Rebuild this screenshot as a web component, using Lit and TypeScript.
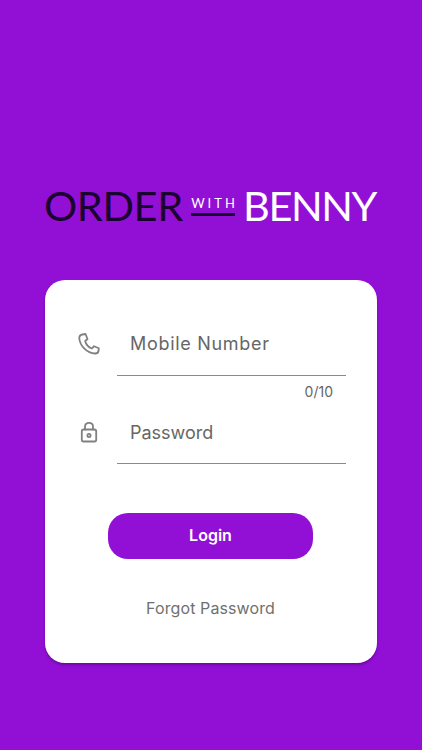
import { LitElement, html, css } from "lit";
import { customElement } from "lit/decorators.js";

@customElement("app-root")
export class AppRoot extends LitElement {
  static styles = css`
    :host { display: block; width: 422px; height: 750px; background: #9210d6; overflow: hidden; font-family: Inter, "Liberation Sans", sans-serif; box-sizing: border-box; padding-top: 181px; }
    .logo { display: flex; align-items: center; height: 48px; padding-left: 44px; font-family: Lato, "Liberation Sans", sans-serif; font-size: 41.5px; line-height: 48px; }
    .order { color: #1a0330; width: 139px; white-space: nowrap; letter-spacing: -0.4px; }
    .benny { color: #fff; white-space: nowrap; letter-spacing: -1.4px; }
    .with { width: 44px; margin: 0 8px 0 8px; display: flex; flex-direction: column; align-items: center; }
    .with span { color: #fff; font-size: 13px; line-height: 16px; letter-spacing: 3px; margin-right: -3px; font-weight: 400; }
    .with i { display: block; width: 44px; height: 3px; background: #1a0330; margin-top: 2px; }
    .card { margin: 51px 45px 0; height: 383px; box-sizing: border-box; background: #fff; border-radius: 20px; box-shadow: 0 2px 3px rgba(50,0,80,.4); padding: 32px 31px 0 32px; display: flex; flex-direction: column; }
    .row { display: flex; align-items: flex-start; height: 64px; }
    .row.second { height: 63px; }
    .icon { width: 24px; height: 24px; margin-top: 19px; color: #808080; flex: none; }
    .field { margin-left: 16px; flex: 1; box-sizing: border-box; border-bottom: 1.5px solid #8a8a8a; padding: 21px 0 0 13px; font-size: 18px; line-height: 22px; color: #666; }
    .row .field { height: 64px; }
    .row.second .field { height: 63px; }
    .wide { letter-spacing: .7px; }
    .count { text-align: right; font-size: 14px; line-height: 18px; color: #666; padding: 7px 13px 0 0; height: 25px; box-sizing: border-box; }
    .btn { align-self: center; margin: 49px 0 0 -2px; width: 205px; height: 46px; padding: 0 0 1px; border: 0; border-radius: 20px; background: #9210d6; color: #fff; font: 600 16px/45px Inter, "Liberation Sans", sans-serif; }
    .forgot { margin: 39px 0 0 -2px; text-align: center; font-size: 16px; line-height: 20px; color: #707070; letter-spacing: .1px; }
  `;

  render() {
    return html`
      <div class="logo">
        <span class="order">ORDER</span>
        <div class="with"><span>WITH</span><i></i></div>
        <span class="benny">BENNY</span>
      </div>
      <div class="card">
        <div class="row">
          <svg class="icon" viewBox="0 0 24 24" fill="none" stroke="currentColor" stroke-width="1.8" stroke-linejoin="round" stroke-linecap="round">
            <path transform="translate(0 1)" d="M5.5 2.5 L8.5 2 L10.5 7 L8.2 9 C9 12.5 12 15.5 15 16.5 L17 14.2 L21.8 16.3 L21.5 19 C21.2 20.8 19.8 21.6 18 21.5 C10 21 3 14 2.3 6.5 C2.2 4.5 3.5 2.8 5.5 2.5 Z"/>
          </svg>
          <div class="field wide">Mobile Number</div>
        </div>
        <div class="count">0/10</div>
        <div class="row second">
          <svg class="icon" viewBox="0 0 24 24" fill="none" stroke="currentColor" stroke-width="1.8" stroke-linejoin="round" stroke-linecap="round">
            <rect x="4.8" y="9.5" width="14.4" height="12" rx="1.8"/>
            <path d="M8 9.5 V6.5 C8 4 9.8 2.8 12 2.8 C14.2 2.8 16 4 16 6.5 V9.5"/>
            <circle cx="12" cy="15.5" r="1.6"/>
          </svg>
          <div class="field">Password</div>
        </div>
        <button class="btn">Login</button>
        <div class="forgot">Forgot Password</div>
      </div>
    `;
  }
}
